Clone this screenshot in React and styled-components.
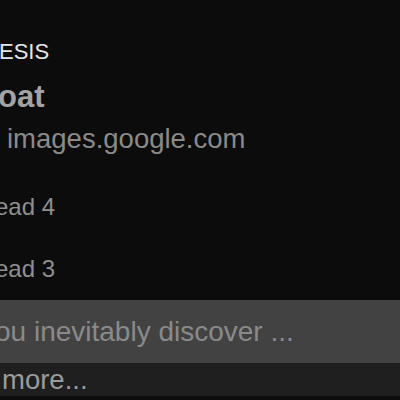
import React from "react";
import styled, { createGlobalStyle } from "styled-components";

const GlobalStyle = createGlobalStyle`
  html, body {
    margin: 0;
    padding: 0;
    background: #0c0c0c;
  }
  body {
    font-family: "Liberation Sans", Arial, sans-serif;
    overflow: hidden;
  }
`;

const Screen = styled.div`
  width: 400px;
  height: 400px;
  overflow: hidden;
  display: flex;
  flex-direction: column;
  background: #0c0c0c;
`;

const Header = styled.div`
  display: flex;
  flex-direction: column;
  padding-top: 37px;
`;

const Section = styled.div`
  height: 30px;
  line-height: 30px;
  font-size: 22px;
  color: #e6e6e6;
  white-space: nowrap;
  margin-left: ${({ $shift }) => $shift}px;
`;

const Headline = styled.div`
  height: 40px;
  line-height: 40px;
  margin-top: 10px;
  font-size: 31px;
  font-weight: 700;
  color: #a3a3a3;
  white-space: nowrap;
  margin-left: ${({ $shift }) => $shift}px;
`;

const Source = styled.div`
  height: 34px;
  line-height: 34px;
  margin-top: 5px;
  font-size: 27.5px;
  color: #8a8a8a;
  white-space: nowrap;
  margin-left: ${({ $shift }) => $shift}px;
`;

const List = styled.div`
  display: flex;
  flex-direction: column;
  margin-top: 20px;
`;

const Row = styled.div`
  height: 62px;
  line-height: 62px;
  font-size: 24px;
  color: #8f8f8f;
  white-space: nowrap;
  margin-left: ${({ $shift }) => $shift}px;
`;

const Excerpt = styled.div`
  height: 63px;
  line-height: 63px;
  background: #424242;
  font-size: 28px;
  color: #8a8a8a;
  white-space: nowrap;
`;

const ExcerptText = styled.span`
  display: inline-block;
  margin-left: ${({ $shift }) => $shift}px;
`;

const MoreBar = styled.div`
  height: 33px;
  box-sizing: border-box;
  padding-top: 1px;
  line-height: 32px;
  background: #1f1f1f;
  font-size: 27.5px;
  color: #9b9b9b;
  white-space: nowrap;
  padding-left: ${({ $shift }) => $shift}px;
`;

export default function App() {
  return (
    <>
      <GlobalStyle />
      <Screen>
        <Header>
          <Section $shift={-1}>ESIS</Section>
          <Headline $shift={-2}>oat</Headline>
          <Source $shift={7}>images.google.com</Source>
        </Header>
        <List>
          <Row $shift={-5}>ead 4</Row>
          <Row $shift={-5}>ead 3</Row>
        </List>
        <Excerpt>
          <ExcerptText $shift={-5}>ou inevitably discover ...</ExcerptText>
        </Excerpt>
        <MoreBar $shift={2}>more...</MoreBar>
      </Screen>
    </>
  );
}
